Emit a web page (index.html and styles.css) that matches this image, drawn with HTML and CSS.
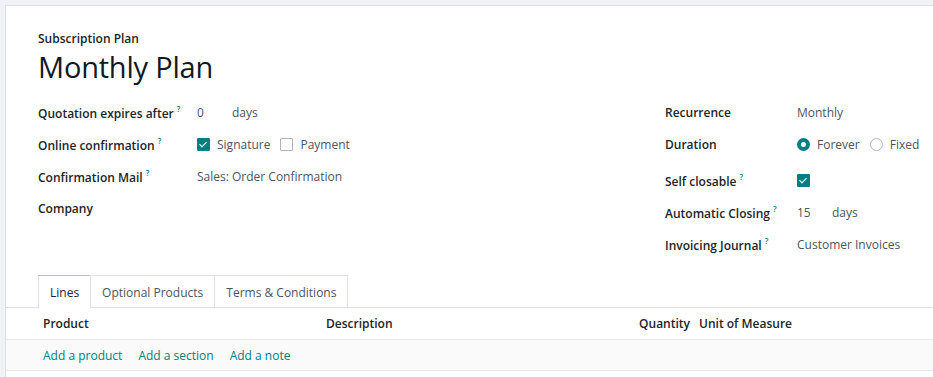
FILE: index.html
```html
<!DOCTYPE html>
<html>
<head>
<meta charset="utf-8">
<link rel="stylesheet" href="styles.css">
</head>
<body>
<div class="sheet">
  <div class="head">
    <div class="kicker">Subscription Plan</div>
    <h1 class="title">Monthly Plan</h1>
  </div>
  <div class="groups">
    <div class="group left">
      <div class="row"><div class="label">Quotation expires after<sup>?</sup></div><div class="val"><span class="num">0</span><span>days</span></div></div>
      <div class="row"><div class="label">Online confirmation<sup>?</sup></div><div class="val"><span class="cb on"></span><span class="opt">Signature</span><span class="cb"></span><span>Payment</span></div></div>
      <div class="row"><div class="label">Confirmation Mail<sup>?</sup></div><div class="val">Sales: Order Confirmation</div></div>
      <div class="row"><div class="label">Company</div><div class="val"></div></div>
    </div>
    <div class="group right">
      <div class="row"><div class="label">Recurrence</div><div class="val">Monthly</div></div>
      <div class="row"><div class="label">Duration</div><div class="val"><span class="radio on"></span><span class="opt">Forever</span><span class="radio"></span><span>Fixed</span></div></div>
      <div class="row tall"><div class="label">Self closable<sup>?</sup></div><div class="val"><span class="cb on"></span></div></div>
      <div class="row"><div class="label">Automatic Closing<sup>?</sup></div><div class="val"><span class="num">15</span><span>days</span></div></div>
      <div class="row"><div class="label">Invoicing Journal<sup>?</sup></div><div class="val">Customer Invoices</div></div>
    </div>
  </div>
  <div class="tabs">
    <div class="tab active">Lines</div>
    <div class="tab">Optional Products</div>
    <div class="tab">Terms &amp; Conditions</div>
  </div>
  <div class="table">
    <div class="thead">
      <div class="c-prod">Product</div>
      <div class="c-desc">Description</div>
      <div class="c-qty">Quantity</div>
      <div class="c-uom">Unit of Measure</div>
    </div>
    <div class="addrow">
      <a>Add a product</a><a>Add a section</a><a>Add a note</a>
    </div>
  </div>
</div>
</body>
</html>
```
FILE: styles.css
```css
html, body { margin: 0; padding: 0; }
body {
  background: #f1f2f5;
  font-family: "Open Sans", "Noto Sans", sans-serif;
  font-size: 12px;
  color: #374151;
  width: 933px;
  height: 377px;
  overflow: hidden;
}
.sheet {
  margin: 5px 0 0 5px;
  background: #fff;
  border-top: 1px solid #dee0e4;
  border-left: 1px solid #dee0e4;
  height: 400px;
}
.head { padding: 24px 0 0 32px; }
.kicker { font-weight: 600; font-size: 12px; color: #212529; line-height: 18px; }
.title {
  margin: 0;
  font-weight: 400;
  font-size: 29px;
  line-height: 38px;
  color: #111827;
  letter-spacing: -0.2px;
}
.groups { display: flex; padding: 10px 0 0 32px; }
.group.left { width: 627px; }
.group.right { flex: 1; }
.row { display: flex; align-items: center; height: 32px; }
.row.tall { height: 36px; padding-top: 4px; box-sizing: border-box; }
.row:last-child { height: 33px; }
.label {
  font-weight: 600;
  color: #212529;
  white-space: nowrap;
}
.left .label { width: 159px; }
.right .label { width: 132px; }
sup { font-size: 8px; color: #017e84; margin-left: 3px; vertical-align: 6px; }
.val { display: flex; align-items: center; color: #4b5563; }
.num { width: 35px; }
.opt { margin-right: 10px; }
.cb {
  width: 11px; height: 11px;
  border: 1px solid #adb5bd;
  border-radius: 1px;
  margin-right: 7px;
  position: relative;
  background: #fff;
}
.cb.on { background: #017e84; border-color: #017e84; }
.cb.on::after {
  content: "";
  position: absolute;
  left: 3px; top: 1px;
  width: 3px; height: 6px;
  border: solid #fff;
  border-width: 0 1.5px 1.5px 0;
  transform: rotate(45deg);
}
.radio {
  width: 11px; height: 11px;
  border: 1px solid #adb5bd;
  border-radius: 50%;
  margin-right: 7px;
}
.radio.on { border: 4px solid #017e84; width: 5px; height: 5px; }
.tabs {
  display: flex;
  margin: 14px 0 0 32px;
  position: relative;
  z-index: 1;
}
.tab {
  height: 31px;
  line-height: 34px;
  padding: 0 11px;
  border: 1px solid #dee2e6;
  border-bottom: none;
  color: #4b5563;
  margin-right: -1px;
}
.tab.active { color: #212529; background: #fff; height: 32px; margin-bottom: -1px; }
.tab:first-child { border-top-color: #cdb9c6; }
.table { border-top: 1px solid #dee2e6; }
.thead {
  display: flex;
  height: 31px;
  align-items: center;
  font-weight: 600;
  color: #212529;
  border-bottom: 1px solid #e5e7eb;
}
.c-prod { width: 283px; padding-left: 37px; }
.c-desc { width: 240px; }
.c-qty { width: 124px; text-align: right; }
.c-uom { padding-left: 9px; }
.addrow {
  display: flex;
  height: 30px;
  align-items: center;
  background: #fafafa;
  padding-left: 37px;
  border-bottom: 1px solid #e5e7eb;
}
.addrow a { color: #017e84; margin-right: 16px; }
```
